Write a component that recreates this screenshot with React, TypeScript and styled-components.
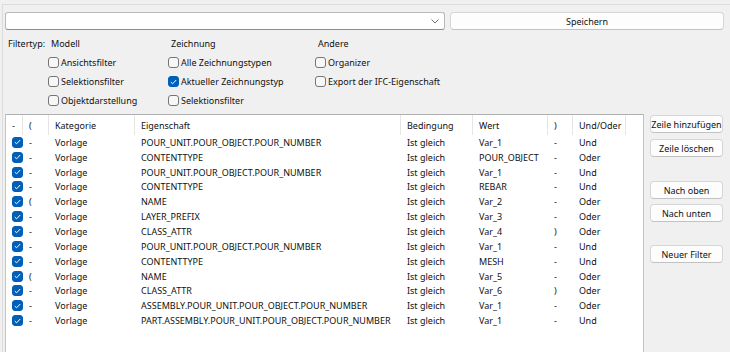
import React from 'react';
import styled, { createGlobalStyle } from 'styled-components';

const GlobalStyle = createGlobalStyle`
  html, body {
    margin: 0;
    padding: 0;
    background: #f0f0f0;
  }
  * {
    box-sizing: border-box;
  }
`;

const Window = styled.div`
  width: 730px;
  height: 352px;
  overflow: hidden;
  background: #f0f0f0;
  font-family: 'Noto Sans', 'Open Sans', sans-serif;
  font-size: 9px;
  color: #111;
  padding: 4px 0 0 2px;
`;

const Frame = styled.div`
  height: 100%;
  border-top: 1px solid #dcdcdc;
  border-left: 1px solid #dcdcdc;
  padding: 7px 6px 0 2px;
`;

const TopRow = styled.div`
  display: flex;
  gap: 5px;
  height: 18px;
`;

const Combo = styled.div`
  flex: 1;
  position: relative;
  background: #fff;
  border: 1px solid #b9b9b9;
  border-bottom-color: #8c8c8c;
  border-radius: 3px;
`;

const Chevron = styled.svg`
  position: absolute;
  right: 5px;
  top: 6px;
`;

const Button = styled.button<{ $gap?: number }>`
  font-family: inherit;
  font-size: inherit;
  color: #111;
  background: #fdfdfd;
  border: 1px solid #d6d6d6;
  border-bottom-color: #c2c2c2;
  border-radius: 4px;
  height: 18px;
  padding: 0;
  white-space: nowrap;
  margin-top: ${(p) => p.$gap ?? 0}px;
  cursor: pointer;
`;

const SaveButton = styled(Button)`
  width: 274px;
`;

const FilterGrid = styled.div`
  display: grid;
  grid-template-columns: 43px 120px 147px 1fr;
  grid-auto-rows: 19px;
  grid-template-rows: 20px;
  margin-top: 3px;
  align-items: center;
`;

const Heading = styled.div`
  padding-left: 3px;
`;

const CheckLabel = styled.label`
  display: flex;
  align-items: center;
  gap: 2px;
  white-space: nowrap;
`;

const Box = styled.span<{ $checked?: boolean }>`
  width: 11px;
  height: 11px;
  border-radius: 3px;
  display: inline-flex;
  align-items: center;
  justify-content: center;
  flex-shrink: 0;
  background: ${(p) => (p.$checked ? '#005fb8' : '#f7f7f7')};
  border: 1px solid ${(p) => (p.$checked ? '#005fb8' : '#767676')};
`;

const Main = styled.div`
  display: flex;
  gap: 6px;
  margin-top: 4px;
`;

const Table = styled.div`
  width: 639px;
  height: 260px;
  background: #fff;
  border: 1px solid #c4c4c4;
  border-top-color: #b0b0b0;
`;

const COLS = '17px 26px 86px 266px 72px 75px 25px 53px 1fr';

const HeaderRow = styled.div`
  display: grid;
  grid-template-columns: ${COLS};
  height: 20px;
`;

const HeaderCell = styled.div`
  display: flex;
  align-items: center;
  padding-left: 6px;
  border-right: 1px solid #e5e5e5;
  white-space: nowrap;
  &:last-child {
    border-right: none;
  }
`;

const Row = styled.div`
  display: grid;
  grid-template-columns: ${COLS};
  height: 14.85px;
`;

const Cell = styled.div`
  display: flex;
  align-items: center;
  padding-left: 6px;
  white-space: nowrap;
`;

const Side = styled.div`
  display: flex;
  flex-direction: column;
  width: 73px;
  padding-top: 1px;
`;

const Check = () => (
  <svg width="7" height="6" viewBox="0 0 7 6">
    <path d="M0.8 3.1 L2.6 4.8 L6.2 1" fill="none" stroke="#fff" strokeWidth="1" />
  </svg>
);

const CheckBox: React.FC<{ checked?: boolean; label?: string }> = ({ checked, label }) => (
  <CheckLabel>
    <Box $checked={checked}>{checked && <Check />}</Box>
    {label}
  </CheckLabel>
);

const rows: [string, string, string, string, string][] = [
  ['-', 'POUR_UNIT.POUR_OBJECT.POUR_NUMBER', 'Var_1', '-', 'Und'],
  ['-', 'CONTENTTYPE', 'POUR_OBJECT', '-', 'Oder'],
  ['-', 'POUR_UNIT.POUR_OBJECT.POUR_NUMBER', 'Var_1', '-', 'Und'],
  ['-', 'CONTENTTYPE', 'REBAR', '-', 'Und'],
  ['(', 'NAME', 'Var_2', '-', 'Oder'],
  ['-', 'LAYER_PREFIX', 'Var_3', '-', 'Oder'],
  ['-', 'CLASS_ATTR', 'Var_4', ')', 'Oder'],
  ['-', 'POUR_UNIT.POUR_OBJECT.POUR_NUMBER', 'Var_1', '-', 'Und'],
  ['-', 'CONTENTTYPE', 'MESH', '-', 'Und'],
  ['(', 'NAME', 'Var_5', '-', 'Oder'],
  ['-', 'CLASS_ATTR', 'Var_6', ')', 'Oder'],
  ['-', 'ASSEMBLY.POUR_UNIT.POUR_OBJECT.POUR_NUMBER', 'Var_1', '-', 'Oder'],
  ['-', 'PART.ASSEMBLY.POUR_UNIT.POUR_OBJECT.POUR_NUMBER', 'Var_1', '-', 'Und'],
];

const App: React.FC = () => {
  return (
    <Window>
      <GlobalStyle />
      <Frame>
        <TopRow>
          <Combo>
            <Chevron width="8" height="5" viewBox="0 0 8 5">
              <path d="M0.5 0.5 L4 4 L7.5 0.5" fill="none" stroke="#707070" strokeWidth="1" />
            </Chevron>
          </Combo>
          <SaveButton>Speichern</SaveButton>
        </TopRow>

        <FilterGrid>
          <Heading>Filtertyp:</Heading>
          <Heading>Modell</Heading>
          <Heading>Zeichnung</Heading>
          <Heading>Andere</Heading>

          <div />
          <CheckBox label="Ansichtsfilter" />
          <CheckBox label="Alle Zeichnungstypen" />
          <CheckBox label="Organizer" />

          <div />
          <CheckBox label="Selektionsfilter" />
          <CheckBox checked label="Aktueller Zeichnungstyp" />
          <CheckBox label="Export der IFC-Eigenschaft" />

          <div />
          <CheckBox label="Objektdarstellung" />
          <CheckBox label="Selektionsfilter" />
          <div />
        </FilterGrid>

        <Main>
          <Table>
            <HeaderRow>
              <HeaderCell>-</HeaderCell>
              <HeaderCell>(</HeaderCell>
              <HeaderCell>Kategorie</HeaderCell>
              <HeaderCell>Eigenschaft</HeaderCell>
              <HeaderCell>Bedingung</HeaderCell>
              <HeaderCell>Wert</HeaderCell>
              <HeaderCell>)</HeaderCell>
              <HeaderCell>Und/Oder</HeaderCell>
              <HeaderCell />
            </HeaderRow>
            {rows.map(([open, prop, value, close, op], i) => (
              <Row key={i}>
                <Cell>
                  <Box $checked>
                    <Check />
                  </Box>
                </Cell>
                <Cell>{open}</Cell>
                <Cell>Vorlage</Cell>
                <Cell>{prop}</Cell>
                <Cell>Ist gleich</Cell>
                <Cell>{value}</Cell>
                <Cell>{close}</Cell>
                <Cell>{op}</Cell>
                <Cell />
              </Row>
            ))}
          </Table>
          <Side>
            <Button>Zeile hinzufügen</Button>
            <Button $gap={6}>Zeile löschen</Button>
            <Button $gap={24}>Nach oben</Button>
            <Button $gap={5}>Nach unten</Button>
            <Button $gap={23}>Neuer Filter</Button>
          </Side>
        </Main>
      </Frame>
    </Window>
  );
};

export default App;
